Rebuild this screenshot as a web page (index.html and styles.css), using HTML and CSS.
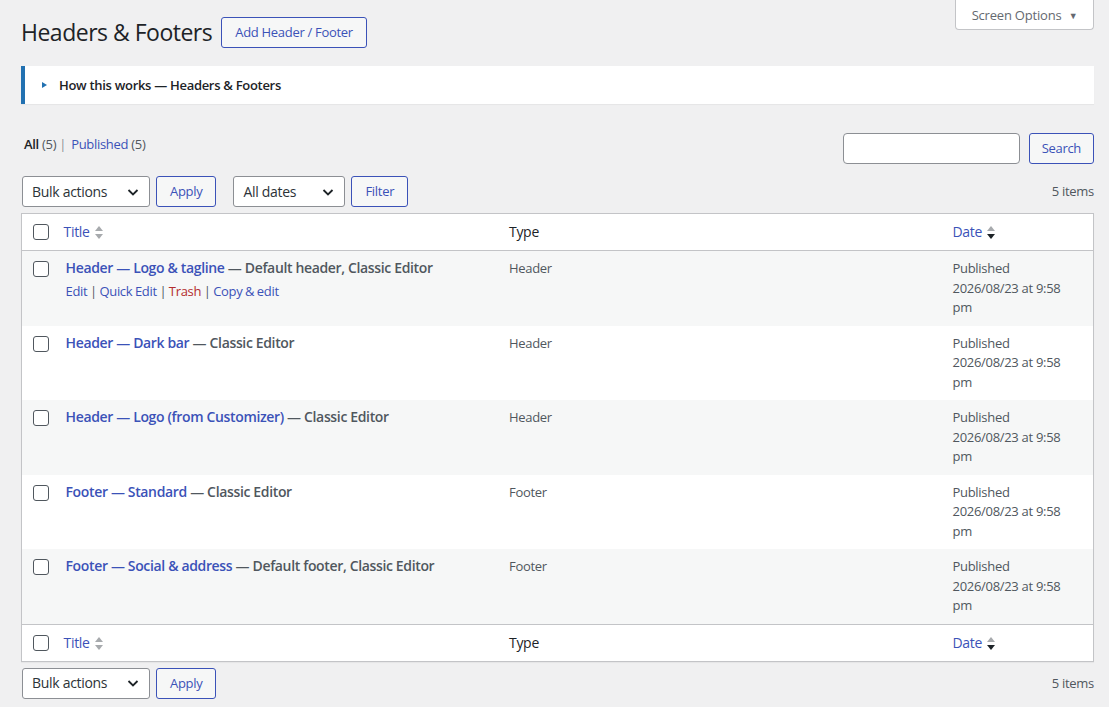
FILE: index.html
```html
<!DOCTYPE html>
<html lang="en">
<head>
    <title>Headers &amp; Footers</title>
    <meta charset="utf-8">
    <meta name="viewport" content="width=device-width, initial-scale=1">
    <link rel="stylesheet" href="styles.css">
</head>
<body>
    <div class="wrap">
        <div class="screen-meta">
            <button class="screen-options">Screen Options <span class="caret">&#9660;</span></button>
        </div>

        <div class="page-head">
            <h1>Headers &amp; Footers</h1>
            <a href="#" class="button">Add Header / Footer</a>
        </div>

        <div class="notice">
            <span class="notice-arrow"></span>
            <span class="notice-title">How this works — Headers &amp; Footers</span>
        </div>

        <div class="list-top">
            <ul class="subsubsub">
                <li><a href="#" class="current">All <span class="count">(5)</span></a> |</li>
                <li><a href="#">Published <span class="count">(5)</span></a></li>
            </ul>
            <div class="search-box">
                <input type="search" class="search-input">
                <a href="#" class="button">Search</a>
            </div>
        </div>

        <div class="tablenav">
            <div class="actions">
                <div class="select select-bulk">Bulk actions <svg class="chevron" viewBox="0 0 16 16"><path d="M3.5 6l4.5 4.5L12.5 6" fill="none" stroke="#1d2327" stroke-width="1.8"/></svg></div>
                <a href="#" class="button">Apply</a>
            </div>
            <div class="actions">
                <div class="select select-dates">All dates <svg class="chevron" viewBox="0 0 16 16"><path d="M3.5 6l4.5 4.5L12.5 6" fill="none" stroke="#1d2327" stroke-width="1.8"/></svg></div>
                <a href="#" class="button">Filter</a>
            </div>
            <span class="displaying-num">5 items</span>
        </div>

        <table class="list-table">
            <colgroup>
                <col class="col-cb">
                <col>
                <col>
                <col class="col-date">
            </colgroup>
            <thead>
                <tr>
                    <th class="check-column"><input type="checkbox"></th>
                    <th class="col-title"><a href="#">Title</a> <svg class="sort" viewBox="0 0 10 16"><path d="M5 2l4 5H1z" fill="#a7aaad"/><path d="M5 15l4-5H1z" fill="#a7aaad"/></svg></th>
                    <th>Type</th>
                    <th><a href="#">Date</a> <svg class="sort" viewBox="0 0 10 16"><path d="M5 2l4 5H1z" fill="#a7aaad"/><path d="M5 15l4-5H1z" fill="#1d2327"/></svg></th>
                </tr>
            </thead>
            <tbody>
                <tr class="alt">
                    <th class="check-column"><input type="checkbox"></th>
                    <td>
                        <strong><a href="#" class="row-title">Header — Logo &amp; tagline</a> — <span class="post-state">Default header, Classic Editor</span></strong>
                        <div class="row-actions">
                            <a href="#">Edit</a> | <a href="#">Quick Edit</a> | <a href="#" class="trash">Trash</a> | <a href="#">Copy &amp; edit</a>
                        </div>
                    </td>
                    <td class="cell">Header</td>
                    <td class="cell">Published<br>2026/08/23 at 9:58<br>pm</td>
                </tr>
                <tr>
                    <th class="check-column"><input type="checkbox"></th>
                    <td><strong><a href="#" class="row-title">Header — Dark bar</a> — <span class="post-state">Classic Editor</span></strong></td>
                    <td class="cell">Header</td>
                    <td class="cell">Published<br>2026/08/23 at 9:58<br>pm</td>
                </tr>
                <tr class="alt">
                    <th class="check-column"><input type="checkbox"></th>
                    <td><strong><a href="#" class="row-title">Header — Logo (from Customizer)</a> — <span class="post-state">Classic Editor</span></strong></td>
                    <td class="cell">Header</td>
                    <td class="cell">Published<br>2026/08/23 at 9:58<br>pm</td>
                </tr>
                <tr>
                    <th class="check-column"><input type="checkbox"></th>
                    <td><strong><a href="#" class="row-title">Footer — Standard</a> — <span class="post-state">Classic Editor</span></strong></td>
                    <td class="cell">Footer</td>
                    <td class="cell">Published<br>2026/08/23 at 9:58<br>pm</td>
                </tr>
                <tr class="alt">
                    <th class="check-column"><input type="checkbox"></th>
                    <td><strong><a href="#" class="row-title">Footer — Social &amp; address</a> — <span class="post-state">Default footer, Classic Editor</span></strong></td>
                    <td class="cell">Footer</td>
                    <td class="cell">Published<br>2026/08/23 at 9:58<br>pm</td>
                </tr>
            </tbody>
            <tfoot>
                <tr>
                    <th class="check-column"><input type="checkbox"></th>
                    <th class="col-title"><a href="#">Title</a> <svg class="sort" viewBox="0 0 10 16"><path d="M5 2l4 5H1z" fill="#a7aaad"/><path d="M5 15l4-5H1z" fill="#a7aaad"/></svg></th>
                    <th>Type</th>
                    <th><a href="#">Date</a> <svg class="sort" viewBox="0 0 10 16"><path d="M5 2l4 5H1z" fill="#a7aaad"/><path d="M5 15l4-5H1z" fill="#1d2327"/></svg></th>
                </tr>
            </tfoot>
        </table>

        <div class="tablenav tablenav-bottom">
            <div class="actions">
                <div class="select select-bulk">Bulk actions <svg class="chevron" viewBox="0 0 16 16"><path d="M3.5 6l4.5 4.5L12.5 6" fill="none" stroke="#1d2327" stroke-width="1.8"/></svg></div>
                <a href="#" class="button">Apply</a>
            </div>
            <span class="displaying-num">5 items</span>
        </div>
    </div>
</body>
</html>
```

FILE: styles.css
```css
* {
    box-sizing: border-box;
}

body {
    margin: 0;
    background: #f0f0f1;
    color: #3c434a;
    font-family: "Open Sans", "Noto Sans", sans-serif;
    font-size: 13px;
    line-height: 1.4;
    letter-spacing: -0.3px;
}

a {
    color: #3b52b8;
    text-decoration: none;
}

.wrap {
    margin: 0 15px 0 21px;
}

.screen-meta {
    float: right;
}

.screen-options {
    height: 30px;
    width: 139px;
    background: #fff;
    border: 1px solid #c3c4c7;
    border-top: none;
    border-radius: 0 0 4px 4px;
    color: #646970;
    font-family: inherit;
    font-size: 13px;
    letter-spacing: -0.2px;
    padding: 0 10px;
}

.screen-options .caret {
    font-size: 9px;
    margin-left: 4px;
    vertical-align: 1px;
}

.page-head {
    display: flex;
    align-items: center;
    gap: 9px;
    padding-top: 17px;
}

h1 {
    margin: 0;
    font-size: 23px;
    font-weight: 400;
    color: #1d2327;
    line-height: 1.3;
    letter-spacing: -0.5px;
}

.button {
    display: inline-flex;
    align-items: center;
    height: 31px;
    padding: 0 13px;
    border: 1px solid #3b52b8;
    border-radius: 3px;
    background: #f6f7f7;
    color: #3b52b8;
    font-size: 13px;
}

.notice {
    margin-top: 18px;
    height: 38px;
    background: #fff;
    border-left: 4px solid #2271b1;
    box-shadow: 0 1px 1px rgba(0, 0, 0, 0.04);
    display: flex;
    align-items: center;
    padding-left: 17px;
}

.notice-arrow {
    width: 0;
    height: 0;
    border-top: 3px solid transparent;
    border-bottom: 3px solid transparent;
    border-left: 5px solid #2271b1;
    margin-right: 12px;
}

.notice-title {
    color: #1d2327;
    font-weight: 600;
    font-size: 13px;
}

.list-top {
    display: flex;
    justify-content: space-between;
    align-items: flex-start;
    margin-top: 29px;
}

.subsubsub {
    list-style: none;
    margin: 0;
    padding: 0 0 0 3px;
    display: flex;
    gap: 5px;
    color: #8c8f94;
    line-height: 22px;
}

.subsubsub a.current {
    color: #1d2327;
    font-weight: 600;
}

.subsubsub .count {
    color: #50575e;
    font-weight: 400;
}

.search-box {
    display: flex;
    gap: 9px;
}

.search-input {
    width: 177px;
    height: 31px;
    border: 1px solid #8c8f94;
    border-radius: 4px;
    background: #fff;
}

.search-box .button {
    padding: 0 12px;
}

.tablenav {
    display: flex;
    align-items: center;
    margin-top: 12px;
    margin-bottom: 6px;
    height: 31px;
}

.tablenav .actions {
    display: flex;
    gap: 6px;
    margin-right: 17px;
}

.select {
    display: flex;
    align-items: center;
    justify-content: space-between;
    height: 31px;
    padding: 0 8px 0 9px;
    background: #fff;
    border: 1px solid #8c8f94;
    border-radius: 3px;
    color: #2c3338;
    font-size: 14px;
}

.select-bulk {
    width: 128px;
    margin-left: 1px;
}

.select-dates {
    width: 112px;
}

.chevron {
    width: 16px;
    height: 16px;
}

.displaying-num {
    margin-left: auto;
    color: #50575e;
    font-size: 13px;
}

.tablenav-bottom {
    margin-top: 6px;
}

.list-table {
    width: 100%;
    border-collapse: collapse;
    table-layout: fixed;
    background: #fff;
    border: 1px solid #c3c4c7;
    box-shadow: 0 1px 1px rgba(0, 0, 0, 0.04);
}

.col-cb {
    width: 34px;
}

.col-date {
    width: 151px;
}

.list-table thead th,
.list-table tfoot th {
    text-align: left;
    font-weight: 400;
    font-size: 14px;
    color: #1d2327;
    padding: 8px 10px;
    line-height: 20px;
    vertical-align: middle;
}

.list-table thead tr {
    border-bottom: 1px solid #c3c4c7;
}

.list-table tfoot tr {
    border-top: 1px solid #c3c4c7;
}

.list-table th.col-title {
    padding-left: 8px;
}

.sort {
    width: 10px;
    height: 16px;
    vertical-align: -3px;
    margin-left: 1px;
}

.list-table .check-column {
    padding: 0 0 0 11px;
    vertical-align: middle;
}

.list-table tbody .check-column {
    vertical-align: top;
    padding-top: 10px;
}

input[type="checkbox"] {
    appearance: none;
    width: 16px;
    height: 16px;
    margin: 0;
    border: 1px solid #50575e;
    border-radius: 3px;
    background: #fff;
    display: block;
}

.list-table tbody td {
    padding: 7px 10px 8px;
    vertical-align: top;
    line-height: 19.5px;
}

.list-table tbody td.cell {
    padding-top: 8px;
    padding-bottom: 8px;
}

.list-table tbody tr.alt {
    background: #f6f7f7;
}

.list-table strong {
    font-size: 14px;
    font-weight: 600;
    color: #50575e;
    letter-spacing: -0.35px;
}

.row-actions {
    padding-top: 3px;
    color: #50575e;
    font-size: 13px;
    word-spacing: -0.5px;
}

.row-actions .trash {
    color: #b32d2e;
}

.cell {
    color: #50575e;
    font-size: 13px;
}
```
